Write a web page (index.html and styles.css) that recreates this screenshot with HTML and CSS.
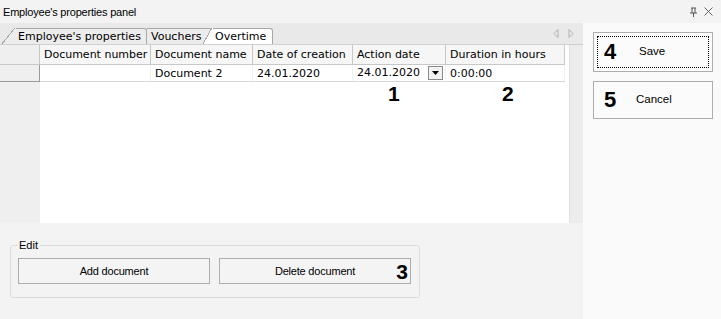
FILE: index.html
```html
<!DOCTYPE html>
<html lang="en">
<head>
    <meta charset="UTF-8">
    <title>Employee's properties panel</title>
    <link rel="stylesheet" href="styles.css">
</head>
<body>
    <div class="titlebar">
        <span class="title">Employee's properties panel</span>
        <span class="title-icons">
            <svg width="9" height="10" viewBox="0 0 9 10"><path d="M2 1h5M3 1v5M6 1v5M1 6h7M4.5 6v4" stroke="#555" fill="none"/></svg>
            <svg width="9" height="9" viewBox="0 0 9 9"><path d="M0.5 0.5l8 8M8.5 0.5l-8 8" stroke="#666" fill="none"/></svg>
        </span>
    </div>
    <div class="main">
        <div class="left">
            <div class="tabs">
                <div class="tab first">Employee's properties</div>
                <div class="tab second">Vouchers</div>
                <div class="tab active">Overtime</div>
                <div class="tab-nav">
                    <svg width="6" height="9" viewBox="0 0 6 9"><path d="M5 0.5L1 4.5L5 8.5Z" stroke="#b0b0b0" fill="none"/></svg>
                    <svg width="6" height="9" viewBox="0 0 6 9"><path d="M1 0.5L5 4.5L1 8.5Z" stroke="#b0b0b0" fill="none"/></svg>
                </div>
            </div>
            <div class="grid">
                <div class="rowheads">
                    <div class="rh-head"></div>
                    <div class="rh-row"></div>
                </div>
                <div class="body">
                    <table>
                        <tr class="head">
                            <th class="c1">Document number</th>
                            <th class="c2">Document name</th>
                            <th class="c3">Date of creation</th>
                            <th class="c4">Action date</th>
                            <th class="c5">Duration in hours</th>
                        </tr>
                        <tr class="data">
                            <td></td>
                            <td>Document 2</td>
                            <td>24.01.2020</td>
                            <td class="date-cell"><span>24.01.2020</span><span class="drop"><svg width="7" height="4" viewBox="0 0 7 4"><path d="M0 0h7L3.5 4Z" fill="#000"/></svg></span></td>
                            <td>0:00:00</td>
                        </tr>
                    </table>
                    <div class="marks">
                        <span class="mark m1">1</span>
                        <span class="mark m2">2</span>
                    </div>
                </div>
                <div class="gutter"></div>
            </div>
            <div class="bottom">
                <fieldset class="group">
                    <legend>Edit</legend>
                    <button class="btn">Add document</button>
                    <button class="btn">Delete document<span class="mark m3">3</span></button>
                </fieldset>
            </div>
        </div>
        <div class="side">
            <button class="side-btn focused"><span class="mark">4</span><span class="label">Save</span></button>
            <button class="side-btn"><span class="mark">5</span><span class="label">Cancel</span></button>
        </div>
    </div>
</body>
</html>
```

FILE: styles.css
```css
body {
    margin: 0;
    width: 721px;
    height: 319px;
    overflow: hidden;
    background: #f3f3f3;
    font-family: "DejaVu Sans", Verdana, sans-serif;
    font-size: 11px;
    color: #000;
}
.titlebar {
    height: 23px;
    display: flex;
    align-items: center;
    justify-content: space-between;
    padding: 0 8px 0 3px;
    background: #f3f3f3;
    font-family: "Liberation Sans", Arial, sans-serif;
    font-size: 11px;
    letter-spacing: -0.2px;
}
.title-icons {
    display: flex;
    gap: 6px;
    align-items: center;
}
.main {
    display: flex;
    height: 296px;
}
.left {
    width: 583px;
    display: flex;
    flex-direction: column;
}
.tabs {
    height: 21px;
    background: #e9e9e9;
    display: flex;
    align-items: flex-end;
    padding-left: 15px;
    position: relative;
    isolation: isolate;
}
.tab {
    position: relative;
    box-sizing: border-box;
    height: 16px;
    line-height: 15px;
    padding: 0 0 0 3px;
    border-top: 1px solid #a8a8a8;
    border-right: 1px solid #a8a8a8;
    border-top-right-radius: 3px;
    background: #ececec;
    font-size: 11px;
    white-space: nowrap;
}
/* slanted left edge of a tab */
.tab::before {
    content: "";
    position: absolute;
    left: -13px;
    top: -1px;
    width: 14px;
    height: 16px;
    background: inherit;
    clip-path: polygon(0 100%, 13px 0, 100% 0, 100% 100%);
}
.tab::after {
    content: "";
    position: absolute;
    left: -13px;
    top: -1px;
    width: 13px;
    height: 16px;
    background: linear-gradient(to bottom right, transparent calc(50% - 0.6px), #a8a8a8 calc(50% - 0.6px), #a8a8a8 calc(50% + 0.4px), transparent calc(50% + 0.4px));
}
.tab.first {
    width: 132px;
    z-index: 2;
}
.tab.second {
    width: 66px;
    padding-left: 4px;
    border-right: none;
    z-index: 1;
}
.tab.second::before,
.tab.second::after {
    display: none;
}
.tab.active {
    width: 61px;
    margin-left: -1px;
    background: #fff;
    z-index: 3;
}
.tab.active::before {
    left: -9px;
    width: 10px;
    clip-path: polygon(0 100%, 9px 0, 100% 0, 100% 100%);
}
.tab.active::after {
    left: -9px;
    width: 9px;
}
.tab-nav {
    margin-left: auto;
    margin-right: 9px;
    align-self: center;
    display: flex;
    gap: 9px;
}
.grid {
    height: 178px;
    display: flex;
    background: #fff;
    border-top: 1px solid #d0d0d0;
}
.rowheads {
    width: 40px;
    background: #efefef;
}
.rh-head {
    height: 19px;
    border-bottom: 1px solid #c8c8c8;
    border-right: 1px solid #c8c8c8;
}
.rh-row {
    height: 16px;
    border: 1px solid #9a9a9a;
    border-top: none;
    border-left: none;
}
.body {
    width: 530px;
    position: relative;
}
.gutter {
    width: 13px;
    background: #ececec;
    border-left: 1px solid #e0e0e0;
}
table {
    border-collapse: collapse;
    table-layout: fixed;
    width: 525px;
    font-size: 11px;
}
th, td {
    padding: 0 4px;
    text-align: left;
    font-weight: normal;
    white-space: nowrap;
    overflow: hidden;
    border-right: 1px solid #d4d4d4;
    border-bottom: 1px solid #d4d4d4;
}
tr.head th {
    height: 19px;
    background: #f6f6f6;
    border-color: #c8c8c8;
}
tr.data td {
    height: 16px;
    border-right-color: #f0f0f0;
    border-bottom-color: #d8d8d8;
}
.c1 { width: 102px; }
.c2 { width: 93px; }
.c3 { width: 91px; }
.c4 { width: 84px; }
.c5 { width: 110px; }
.date-cell span:first-child {
    display: inline-block;
    width: 71px;
}
.drop {
    display: inline-flex;
    width: 15px;
    height: 14px;
    border: 1px solid #8a8a8a;
    background: #f2f2f2;
    align-items: center;
    justify-content: center;
    vertical-align: middle;
    box-sizing: border-box;
}
.mark {
    font-family: "Liberation Sans", Arial, sans-serif;
    font-weight: bold;
    font-size: 21px;
    line-height: 1;
    letter-spacing: 0;
}
.marks .mark {
    position: absolute;
    top: 38px;
}
.m1 { left: 348px; }
.m2 { left: 462px; }
.bottom {
    flex: 1;
    padding: 16px 0 0 10px;
}
.group {
    margin: 0;
    width: 410px;
    box-sizing: border-box;
    height: 59px;
    border: 1px solid #dcdcdc;
    border-radius: 3px;
    padding: 7px 8px 0 7px;
    display: flex;
    gap: 9px;
    align-items: flex-start;
}
.group legend {
    font-family: "Liberation Sans", Arial, sans-serif;
    font-size: 11px;
    padding: 0 2px 0 1px;
    margin-left: 0;
}
.btn {
    flex: 1;
    height: 26px;
    border: 1px solid #adadad;
    background: #f4f4f4;
    font-family: "Liberation Sans", Arial, sans-serif;
    font-size: 11px;
    letter-spacing: -0.2px;
    position: relative;
    padding: 0;
}
.m3 {
    position: absolute;
    right: 2px;
    top: 2px;
}
.side {
    flex: 1;
    background: #fafafa;
    padding: 9px 8px 0 10px;
    display: flex;
    flex-direction: column;
    gap: 9px;
}
.side-btn {
    height: 40px;
    border: 1px solid #adadad;
    background: #fbfbfb;
    font-family: "Liberation Sans", Arial, sans-serif;
    font-size: 11.5px;
    display: flex;
    align-items: center;
    padding: 0 0 0 10px;
    position: relative;
}
.side-btn .mark {
    width: 26px;
    text-align: left;
    font-size: 22px;
}
.side-btn .label {
    margin-left: 9px;
    margin-top: -2px;
}
.side-btn:last-child {
    height: 38px;
}
.side-btn:last-child .label {
    margin-left: 6px;
}
.side-btn.focused::after {
    content: "";
    position: absolute;
    inset: 3px;
    border: 1px dotted #000;
}
```
